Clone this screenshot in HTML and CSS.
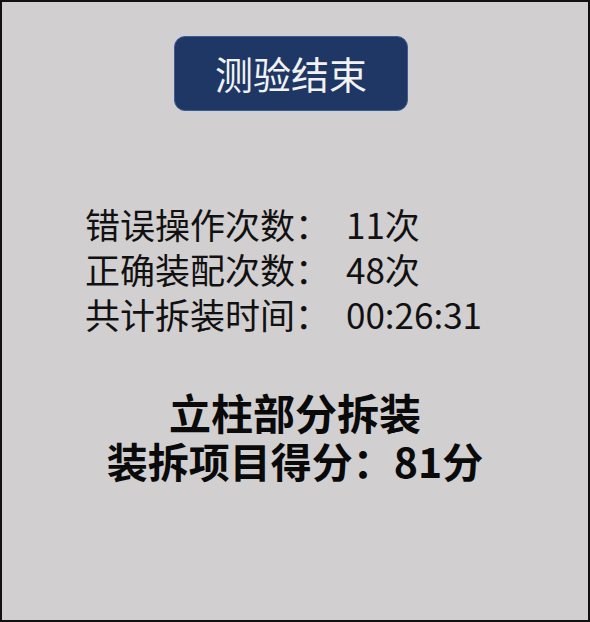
FILE: index.html
```html
<!DOCTYPE html>
<html lang="zh-CN">
<head>
<meta charset="utf-8">
<link rel="stylesheet" href="styles.css">
</head>
<body>
<div class="panel">
  <div class="btn-row"><div class="end-btn">测验结束</div></div>
  <div class="stats">
    <div class="stat"><span class="label">错误操作次数：</span><span class="value">11次</span></div>
    <div class="stat"><span class="label">正确装配次数：</span><span class="value">48次</span></div>
    <div class="stat"><span class="label">共计拆装时间：</span><span class="value">00:26:31</span></div>
  </div>
  <div class="result">
    <div class="title">立柱部分拆装</div>
    <div class="score">装拆项目得分：81分</div>
  </div>
</div>
</body>
</html>
```
FILE: styles.css
```css
html, body {
  margin: 0;
  padding: 0;
}
body {
  font-family: "Noto Sans CJK SC", "Noto Sans", sans-serif;
}
.panel {
  box-sizing: border-box;
  width: 590px;
  height: 622px;
  border: 2px solid #111;
  background: #d1cfd0;
  display: flex;
  flex-direction: column;
}
.btn-row {
  display: flex;
  justify-content: center;
  margin-top: 34px;
  padding-right: 8px;
}
.end-btn {
  box-sizing: border-box;
  width: 234px;
  height: 75px;
  background: #1f3764;
  border: 1.5px solid #3b5d94;
  border-radius: 11px;
  color: #f2f2f2;
  font-size: 38px;
  display: flex;
  align-items: center;
  justify-content: center;
  padding-bottom: 3px;
}
.stats {
  margin-top: 90px;
  padding-left: 83px;
  font-size: 35px;
  line-height: 45px;
  color: #111;
}
.value {
  margin-left: 16px;
}
.result {
  margin-top: 52px;
  text-align: center;
  font-weight: bold;
  line-height: 48px;
  color: #0a0a0a;
}
.title {
  font-size: 42px;
}
.score {
  font-size: 41px;
}
```
